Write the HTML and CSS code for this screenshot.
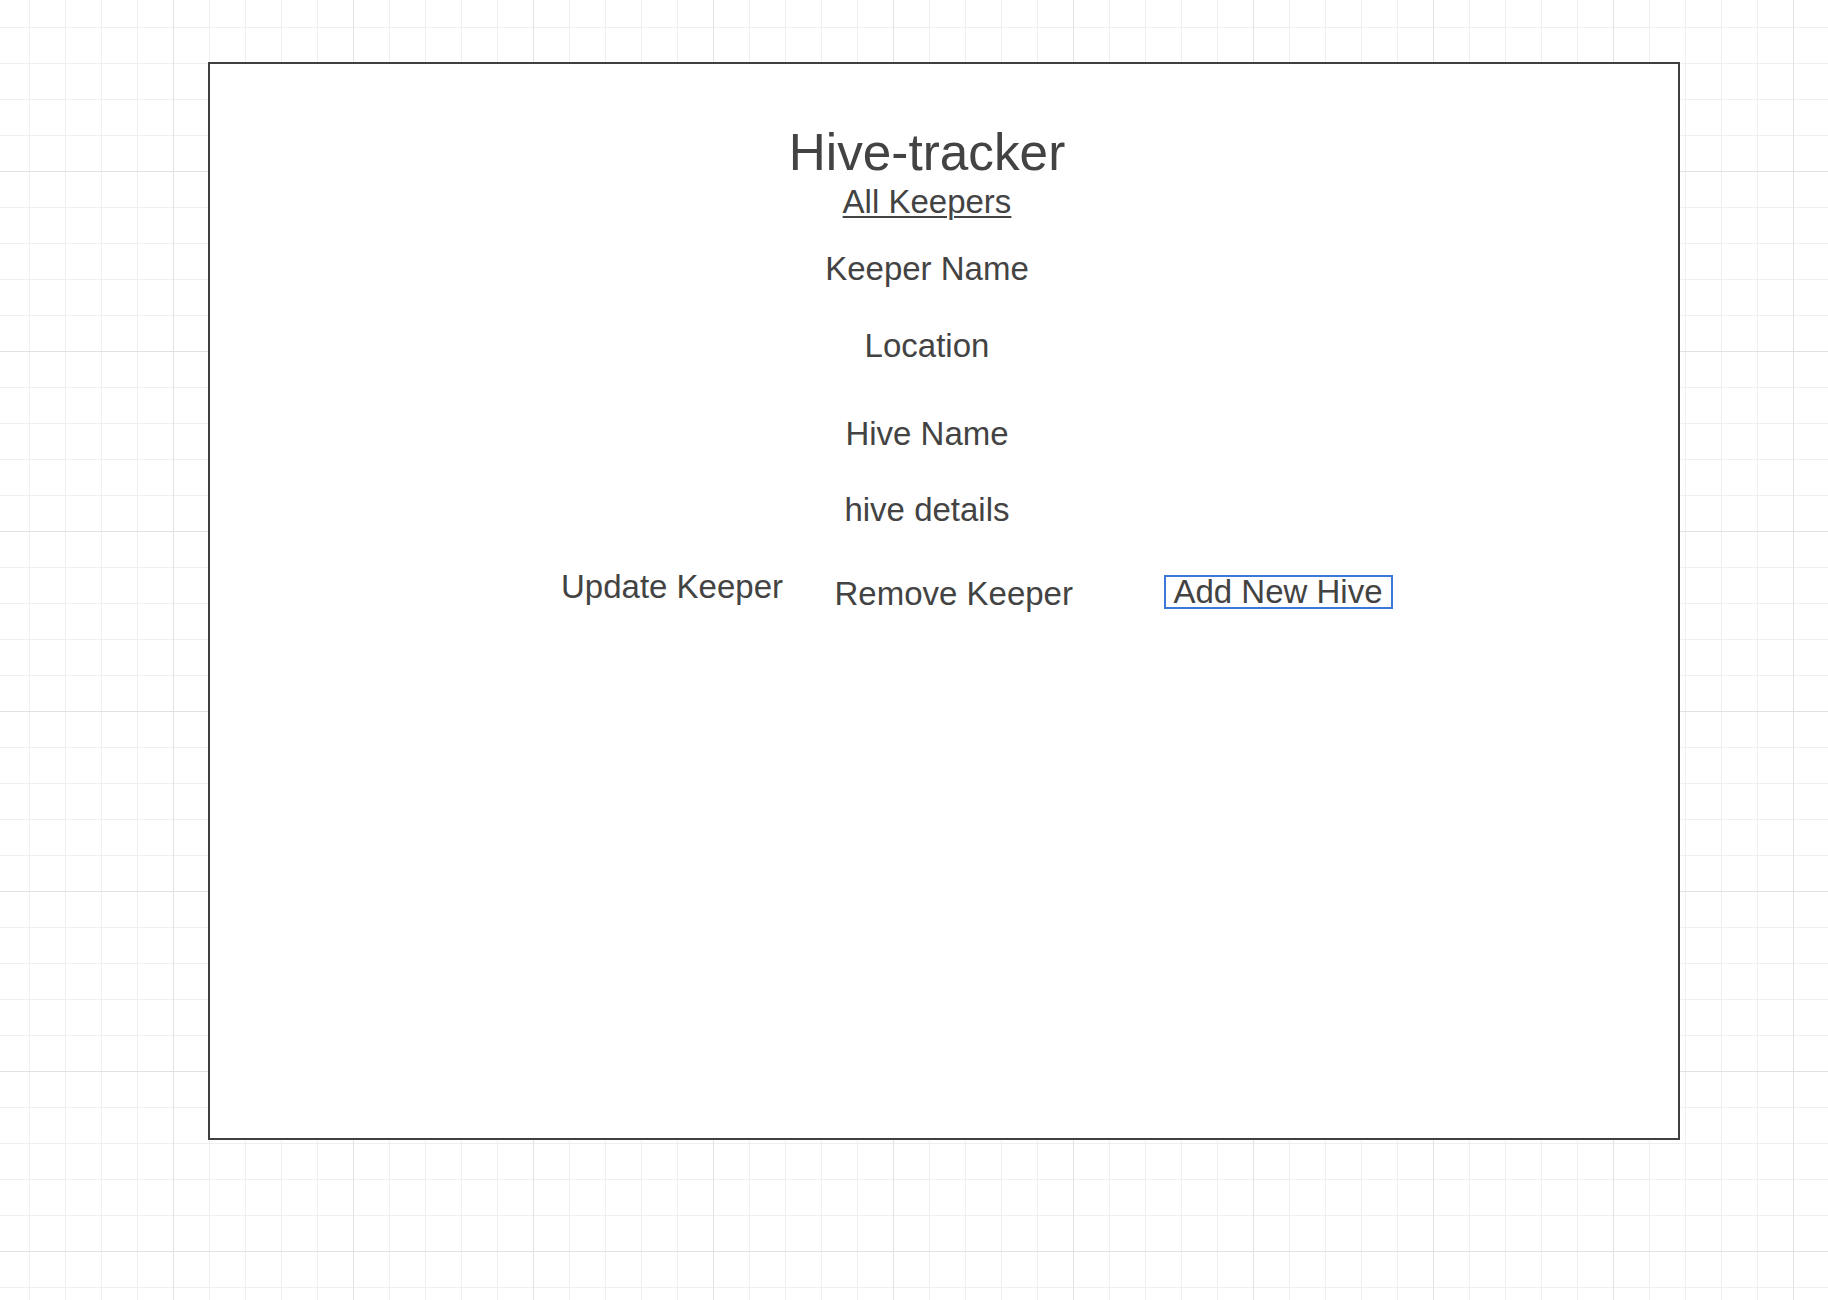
FILE: index.html
```html
<!DOCTYPE html>
<html lang="en">
<head>
<meta charset="utf-8">
<title>Hive-tracker</title>
<link rel="stylesheet" href="styles.css">
</head>
<body>
  <div class="frame">
    <div class="title">Hive-tracker</div>
    <div class="link">All Keepers</div>
    <div class="label keeper-name">Keeper Name</div>
    <div class="label location">Location</div>
    <div class="label hive-name">Hive Name</div>
    <div class="label hive-details">hive details</div>
    <div class="actions">
      <div class="action update">Update Keeper</div>
      <div class="action remove">Remove Keeper</div>
      <div class="action add">Add New Hive</div>
    </div>
  </div>
</body>
</html>
```

FILE: styles.css
```css
html, body {
  margin: 0;
  padding: 0;
}

body {
  width: 1828px;
  height: 1300px;
  box-sizing: border-box;
  padding: 62px 0 0 208px;
  background-color: #ffffff;
  background-image:
    linear-gradient(to right, #e2e2e2 1px, transparent 1px),
    linear-gradient(to bottom, #e2e2e2 1px, transparent 1px),
    linear-gradient(to right, #efefef 1px, transparent 1px),
    linear-gradient(to bottom, #efefef 1px, transparent 1px);
  background-size: 180px 180px, 180px 180px, 36px 36px, 36px 36px;
  background-position: 173px 0, 0 171px, 29px 0, 0 27px;
  font-family: "Liberation Sans", Arial, sans-serif;
  color: #434343;
  overflow: hidden;
}

.frame {
  box-sizing: border-box;
  width: 1472px;
  height: 1078px;
  border: 2px solid #404040;
  background: #ffffff;
  padding: 60px 34px 0 0;
  display: flex;
  flex-direction: column;
  align-items: center;
}

.title {
  font-size: 51.3px;
  line-height: 58px;
  white-space: nowrap;
}

.link {
  font-size: 33px;
  line-height: 40px;
  text-decoration: underline;
  text-decoration-thickness: 2px;
  text-underline-offset: 3px;
  white-space: nowrap;
}

.label {
  font-size: 33px;
  line-height: 40px;
  white-space: nowrap;
}

.keeper-name { margin-top: 27px; }
.location { margin-top: 36.7px; }
.hive-name { margin-top: 48px; }
.hive-details { margin-top: 36.5px; }

.actions {
  align-self: stretch;
  display: flex;
  align-items: flex-start;
  margin-top: 37px;
  padding-left: 351px;
}

.action {
  font-size: 33px;
  line-height: 40px;
  white-space: nowrap;
}

.remove {
  margin-left: 51.5px;
  margin-top: 7px;
}

.add {
  margin-left: 91px;
  margin-top: 7.5px;
  box-sizing: border-box;
  height: 34px;
  border: 2px solid #3d78d8;
  padding: 1px 8px 0 7.5px;
  line-height: 27px;
}
```
